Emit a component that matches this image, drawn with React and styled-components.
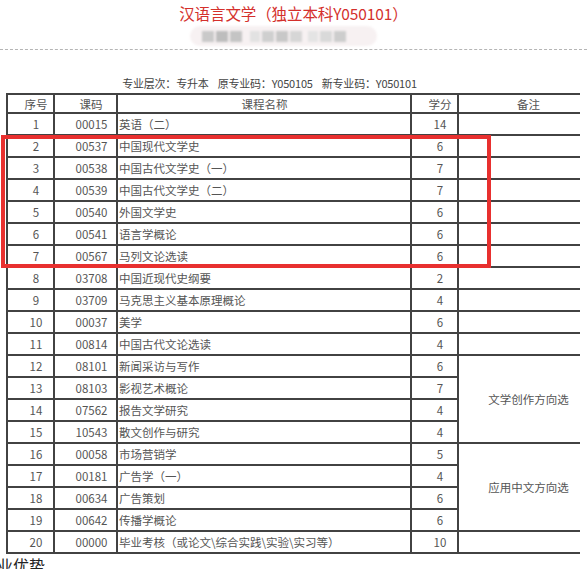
import React from "react"
import styled, { createGlobalStyle } from "styled-components"

const GlobalStyle = createGlobalStyle`
  html, body {
    margin: 0;
    padding: 0;
    background: #fff;
    overflow: hidden;
  }
  body {
    font-family: "Noto Sans CJK SC", "Noto Sans", sans-serif;
  }
`

const Page = styled.div`
  position: relative;
  width: 587px;
  height: 569px;
  overflow: hidden;
`

const Title = styled.h1`
  margin: 0;
  padding-top: 3px;
  text-align: center;
  font-size: 15.5px;
  line-height: 21px;
  font-weight: normal;
  color: #d4302c;
  letter-spacing: -0.1px;
`

const BlurRow = styled.div`
  display: flex;
  justify-content: center;
  padding-top: 2px;
  padding-right: 20px;
`

const BlurPill = styled.div`
  display: flex;
  align-items: center;
  gap: 2px;
  width: 187px;
  height: 20px;
  padding: 0 12px;
  box-sizing: border-box;
  border-radius: 10px;
  background: #f7f1f2;
  filter: blur(1.2px);
`

const BlurBlock = styled.span`
  display: block;
  width: ${p => p.w}px;
  height: 11px;
  margin-left: ${p => p.gap || 0}px;
  background: ${p => p.c};
`

const Dotted = styled.div`
  margin-top: 3px;
  border-top: 1px dashed #b5b5b5;
`

const Info = styled.div`
  margin-top: 26px;
  padding-right: 48px;
  text-align: center;
  font-size: 11px;
  line-height: 14px;
  letter-spacing: -0.2px;
  color: #444;
  white-space: pre;
`

const TableWrap = styled.div`
  margin-top: 3px;
  padding-left: 6px;
`

const Table = styled.table`
  border-collapse: collapse;
  table-layout: fixed;
  width: 573px;
  font-size: 11.5px;
  color: #555;
`

const Cell = styled.td`
  border: 2px solid #424242;
  border-right: ${p => (p.last ? "none" : "2px solid #424242")};
  height: ${p => (p.head ? 17 : 20)}px;
  padding: 0 0 0 ${p => (p.align === "left" ? 1 : p.shift || 11)}px;
  text-align: ${p => p.align || "center"};
  vertical-align: middle;
  line-height: 16px;
  white-space: nowrap;
  overflow: hidden;
`

const HeadCell = styled(Cell).attrs({ as: "th", head: true })`
  font-weight: normal;
`

const RedFrame = styled.div`
  position: absolute;
  left: 1px;
  top: 135px;
  width: 490px;
  height: 133px;
  border: 4px solid #e8302f;
  box-sizing: border-box;
`

const Footer = styled.div`
  margin-top: 1px;
  margin-left: -3px;
  font-size: 16px;
  line-height: 20px;
  color: #222;
`

const courses = [
  ["1", "00015", "英语（二）", "14"],
  ["2", "00537", "中国现代文学史", "6"],
  ["3", "00538", "中国古代文学史（一）", "7"],
  ["4", "00539", "中国古代文学史（二）", "7"],
  ["5", "00540", "外国文学史", "6"],
  ["6", "00541", "语言学概论", "6"],
  ["7", "00567", "马列文论选读", "6"],
  ["8", "03708", "中国近现代史纲要", "2"],
  ["9", "03709", "马克思主义基本原理概论", "4"],
  ["10", "00037", "美学", "6"],
  ["11", "00814", "中国古代文论选读", "4"],
  ["12", "08101", "新闻采访与写作", "6"],
  ["13", "08103", "影视艺术概论", "7"],
  ["14", "07562", "报告文学研究", "4"],
  ["15", "10543", "散文创作与研究", "4"],
  ["16", "00058", "市场营销学", "5"],
  ["17", "00181", "广告学（一）", "4"],
  ["18", "00634", "广告策划", "6"],
  ["19", "00642", "传播学概论", "6"],
  ["20", "00000", "毕业考核（或论文\\综合实践\\实验\\实习等）", "10"],
]

// merged remark cells: start row index -> [span, text]
const remarks = {
  11: [4, "文学创作方向选"],
  15: [4, "应用中文方向选"],
}
const covered = [12, 13, 14, 16, 17, 18]

const blocks = [
  ["#c9c9c9", 12, 0],
  ["#bdbdbd", 12, 0],
  ["#c4c4c4", 12, 0],
  ["#e2e2e2", 10, 6],
  ["#cfcfcf", 12, 0],
  ["#c8c8c8", 12, 0],
  ["#d6d6d6", 12, 0],
  ["#e4e4e4", 10, 4],
  ["#d9d9d9", 12, 0],
  ["#cdcdcd", 12, 0],
]

export default function App() {
  return (
    <Page>
      <GlobalStyle />
      <Title>汉语言文学（独立本科Y050101）</Title>
      <BlurRow>
        <BlurPill>
          {blocks.map(([c, w, g], i) => (
            <BlurBlock key={i} c={c} w={w} gap={g} />
          ))}
        </BlurPill>
      </BlurRow>
      <Dotted />
      <Info>{"专业层次：专升本    原专业码：Y050105    新专业码：Y050101"}</Info>
      <TableWrap>
        <Table>
          <colgroup>
            <col style={{ width: 47 }} />
            <col style={{ width: 63 }} />
            <col style={{ width: 294 }} />
            <col style={{ width: 47 }} />
            <col style={{ width: 122 }} />
          </colgroup>
          <thead>
            <tr>
              <HeadCell>序号</HeadCell>
              <HeadCell>课码</HeadCell>
              <HeadCell shift={1}>课程名称</HeadCell>
              <HeadCell>学分</HeadCell>
              <HeadCell last shift={18}>备注</HeadCell>
            </tr>
          </thead>
          <tbody>
            {courses.map(([no, code, name, credit], i) => (
              <tr key={no}>
                <Cell>{no}</Cell>
                <Cell shift={12}>{code}</Cell>
                <Cell align="left">{name}</Cell>
                <Cell>{credit}</Cell>
                {remarks[i] ? (
                  <Cell last shift={18} rowSpan={remarks[i][0]}>
                    {remarks[i][1]}
                  </Cell>
                ) : covered.includes(i) ? null : (
                  <Cell last />
                )}
              </tr>
            ))}
          </tbody>
        </Table>
      </TableWrap>
      <Footer>业优势</Footer>
      <RedFrame />
    </Page>
  )
}
